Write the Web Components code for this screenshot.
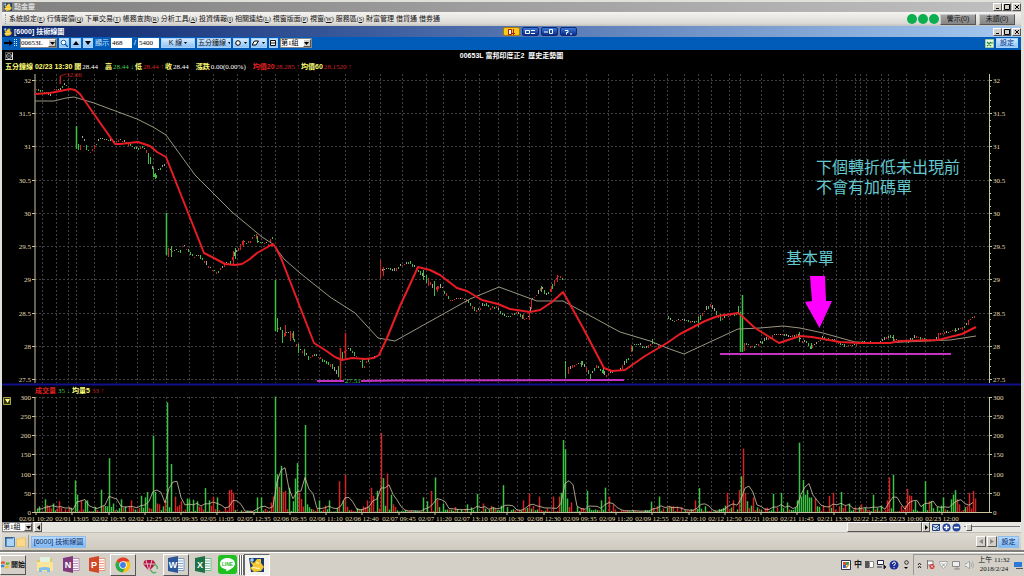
<!DOCTYPE html>
<html>
<head>
<meta charset="utf-8">
<title>點金靈</title>
<style>
    :root{
        --face: #d4d0c8;
        --sans: "Liberation Sans", "Noto Sans CJK TC", sans-serif;
        --serif: "Liberation Serif", "Noto Sans CJK TC", serif;
    }

    body{
        margin: 0;
        background: var(--face);
        font: 7px/10px var(--sans);
        color: #111;
    }
</style>
</head>
<body>
<trade-window></trade-window>
<task-bar></task-bar>

<script>
const make = (html) => {
    const template = document.createElement('template');
    template.innerHTML = html;
    return template;
};

const attach = (el, template) => {
    el.attachShadow({mode: 'open'});
    el.shadowRoot.appendChild(template.content.cloneNode(true));
};

// rules shared by every shadow root that holds controls
const base = `
    *{ box-sizing: border-box; }
    button, input, select{
        font: inherit;
        color: inherit;
        margin: 0;
        padding: 0;
        border: 0;
        border-radius: 0;
        background: none;
    }
    button{
        display: inline-flex;
        align-items: center;
        justify-content: center;
        white-space: nowrap;
    }
    svg{ display: block; }
    .raised{
        background: var(--face);
        border: 1px solid;
        border-color: #fff #555 #555 #fff;
    }
    .grow{ flex: 1; }
`;

const logo = `
    <svg width="10" height="10" viewBox="0 0 18 18">
        <path d="M1 2h15v14H3z" fill="#173a72"/>
        <path d="M2 5l4 2 3-4 4 0 0 4 3 4-3 4-7 1-4-4 3-2z" fill="#f4c62c"/>
        <path d="M4 12c3-2 5 2 8 0M8 6l3 2" stroke="#fff3b0" stroke-width="1.4" fill="none"/>
        <circle cx="4" cy="4" r="1.8" fill="#9fd0ff"/>
    </svg>`;

/* ---------- title bar with the three window buttons ---------- */
const titleBar = make(`
    <style>
        ${base}
        :host{
            display: flex;
            align-items: center;
            height: 11px;
            padding: 0 0 0 1px;
            color: #fff;
            font-weight: bold;
            background: linear-gradient(90deg, #0a246a, #3a5a9c 35%, #a6caf0);
        }
        :host([inactive]){
            height: 10px;
            color: #ddd;
            background: linear-gradient(90deg, #808080, #c0c0c0);
        }
        .side{ flex: 1; display: flex; align-items: center; gap: 1px; }
        .end{ justify-content: flex-end; gap: 0; }
        .raised{ width: 9px; height: 8px; color: #000; }
        .close{ margin-left: 1px; }
    </style>
    <div class="side">${logo}<slot></slot></div>
    <slot name="middle"></slot>
    <div class="side end">
        <button class="raised" aria-label="最小化"><svg width="6" height="6"><path d="M1 4.500h3" stroke="#000"/></svg></button>
        <button class="raised" aria-label="最大化"><svg width="6" height="6"><path d="M.5 .5h5v5h-5z" fill="none" stroke="#000"/></svg></button>
        <button class="raised close" aria-label="關閉"><svg width="6" height="6"><path d="M1 1l4 4M5 1l-4 4" stroke="#000"/></svg></button>
    </div>
`);

class TitleBar extends HTMLElement {
    constructor(){
        super();
        attach(this, titleBar);
    }
}

/* ---------- menu ---------- */
const menus = [
    ['系統設定', 'E'], ['行情報價', 'Q'], ['下單交易', 'T'], ['帳務查詢', 'R'],
    ['分析工具', 'A'], ['投資情報', 'I'], ['相關連結', 'L'], ['視窗版面', 'P'],
    ['視窗', 'W'], ['服務區', 'S'], ['財富管理'], ['借貸通'], ['借券通']
];

const menuBar = make(`
    <style>
        ${base}
        :host{
            display: flex;
            align-items: center;
            height: 14px;
            padding: 0 6px 0 3px;
            background: linear-gradient(#f4f3f1, #dcdad6 80%, #c4c2be);
        }
        nav{ display: flex; gap: 2px; padding-left: 3px; border-left: 1px dotted #999; }
        small{ font: 6px/10px var(--serif); }
        .lamp{ width: 10px; height: 10px; border-radius: 50%; background: #0caf50; margin-right: 1px; }
        .note{
            width: 36px;
            height: 11px;
            margin-left: 3px;
            background: linear-gradient(#a5a5a5, #858585);
            border: 1px solid;
            border-color: #ccc #555 #555 #ccc;
        }
        .lamp + .note{ margin-left: 0; }
    </style>
    <nav>
        ${menus.map(([name, key]) => `<button>${name}${key ? `<small>(<u>${key}</u>)</small>` : ''}</button>`).join('')}
    </nav>
    <span class="grow"></span>
    <span class="lamp"></span><span class="lamp"></span><span class="lamp"></span>
    <button class="note">警示(0)</button>
    <button class="note">未讀(0)</button>
`);

class MenuBar extends HTMLElement {
    constructor(){
        super();
        attach(this, menuBar);
    }
}

/* ---------- drop-down ---------- */
const dropDown = make(`
    <style>
        ${base}
        :host{
            display: inline-flex;
            height: 10px;
            background: #fff;
            border: 1px solid #888;
            box-sizing: border-box;
            color: #000;
        }
        select{
            appearance: none;
            flex: 1;
            min-width: 0;
            font: 7px/8px var(--serif);
            outline: 0;
        }
        .raised{ width: 8px; display: flex; align-items: center; justify-content: center; pointer-events: none; }
    </style>
    <select><option></option></select>
    <span class="raised"><svg width="5" height="3"><path d="M0 0h5L2.500 3z"/></svg></span>
`);

class DropDown extends HTMLElement {
    constructor(){
        super();
        attach(this, dropDown);
    }

    connectedCallback(){
        const select = this.shadowRoot.querySelector('select');
        select.options[0].text = this.getAttribute('value');
        select.setAttribute('aria-label', this.getAttribute('label'));
    }
}

/* ---------- chart toolbar ---------- */
const chartTools = make(`
    <style>
        ${base}
        :host{
            display: flex;
            align-items: center;
            gap: 2px;
            height: 13px;
            padding: 0 3px 1px 2px;
            background: #005cb8;
        }
        .code{ width: 37px; }
        .group{ width: 32px; }
        .tool{ height: 10px; background: linear-gradient(#d4eaff, #8fc4f8); border: 1px solid #a9d2fb; }
        .sq{ width: 10px; }
        .wide{ width: 34px; gap: 2px; }
        .mid{ width: 16px; gap: 3px; }
        .save{ width: 9px; }
        .set{ width: 22px; color: #003080; }
        label{ color: #cfe4ff; }
        input{ width: 21px; height: 10px; background: #fff; padding-left: 1px; font: 7px/10px var(--serif); color: #000; }
        .slash{ color: #fff; }
    </style>
    <svg width="14" height="10"><path d="M0 4h5v-2l4 3-4 3V6H0z" fill="#000"/><path d="M10.500 1v8M12.500 1v8" stroke="#dfefff" stroke-dasharray="1 1"/></svg>
    <drop-down class="code" value="00653L" label="商品代號"></drop-down>
    <button class="tool sq" aria-label="查詢"><svg width="8" height="8"><circle cx="3.500" cy="3.500" r="2.300" fill="#fff" stroke="#1764b4"/><path d="M5 5l3 3" stroke="#1764b4" stroke-width="1.500"/></svg></button>
    <button class="tool sq" aria-label="上一檔"><svg width="6" height="4"><path d="M0 4h6L3 0z"/></svg></button>
    <button class="tool sq" aria-label="下一檔"><svg width="6" height="4"><path d="M0 0h6L3 4z"/></svg></button>
    <label for="shown">顯示</label>
    <input id="shown" value="468">
    <span class="slash">/</span>
    <input value="5400" aria-label="總筆數">
    <button class="tool wide"><span>K 線</span><svg width="3" height="2"><path d="M0 0h3L1.500 2z"/></svg></button>
    <button class="tool wide"><span>五分鐘線</span><svg width="3" height="2"><path d="M0 0h3L1.500 2z"/></svg></button>
    <button class="tool mid" aria-label="圖形"><svg width="6" height="6"><circle cx="3" cy="3" r="2.300" fill="#fff" stroke="#000"/></svg><svg width="3" height="2"><path d="M0 0h3L1.500 2z"/></svg></button>
    <button class="tool mid" aria-label="清除"><svg width="7" height="6"><path d="M2.500 1h4l-2.500 4h-4z" fill="#fff" stroke="#000"/></svg><svg width="3" height="2"><path d="M0 0h3L1.500 2z"/></svg></button>
    <button class="tool save" aria-label="儲存"><svg width="6" height="6"><path d="M.5 .5h5v5h-5zM1 3h4" fill="#fff" stroke="#111"/></svg></button>
    <drop-down class="group" value="第1組" label="組別"></drop-down>
    <span class="grow"></span>
    <svg width="9" height="9"><path d="M.5 .5h8v8h-8z" fill="#e9f7e4" stroke="#9ccf94"/><path d="M2 3l4 4M6 3l-4 4M6 4h2" stroke="#1c8a2c" stroke-width="1.200"/></svg>
    <button class="tool set">設定</button>
`);

class ChartTools extends HTMLElement {
    constructor(){
        super();
        attach(this, chartTools);
    }
}

/* ---------- chart ---------- */
const left = 35;
const right = 989;
const priceY = v => 346 - (v - 28) * 66.6;
const volY = v => 512 - v * 0.385;

const gridX = [42, 56, 68, 76, 94, 116, 137, 153, 166, 189, 213, 237, 261, 275, 298, 319, 345, 369, 380,
    402, 426, 443, 465, 479, 498, 517, 529, 551, 565, 586, 608, 632, 654, 667, 684, 698, 711, 729, 740,
    761, 783, 803, 823, 836, 855, 860, 866, 881, 888, 906, 925, 943, 964];

const times = ['02/01 10:20', '02/01 13:05', '02/02 10:35', '02/02 12:25', '02/05 09:35', '02/05 11:05',
    '02/05 12:35', '02/06 09:35', '02/06 11:10', '02/06 12:40', '02/07 09:45', '02/07 11:20', '02/07 13:10',
    '02/08 10:30', '02/08 12:30', '02/09 09:35', '02/09 11:20', '02/09 12:55', '02/12 10:10', '02/12 12:50',
    '02/21 10:00', '02/21 11:45', '02/21 13:30', '02/22 12:25', '02/23 10:00', '02/23 12:00'];

const ma20 = '35,94 50,93 60,91 70,89 75,90 80,94 115,144 120,144 138,142 150,146 157,152 166,157 204,253 212,257 225,264 235,265 242,264 250,259 257,253 273,244 276,248 281,258 314,343 325,350 335,357 342,360 352,358 365,359 374,358 379,355 387,338 400,306 418,267 430,270 440,275 457,288 467,291 482,300 498,304 510,309 530,312 540,310 552,302 563,292 567,299 582,326 604,368 612,371 625,370 645,356 667,343 680,334 705,321 718,316 738,313 742,316 755,328 779,343 800,336 812,337 840,342 860,343 890,343 900,341 938,340 962,334 976,327';
const ma60 = '35,101 54,101 66,98 74,97 94,103 137,119 153,127 166,135 195,175 232,212 262,237 273,244 284,259 300,273 330,297 355,313 378,338 395,341 470,299 499,287 537,301 563,301 620,332 650,341 667,348 684,354 738,329 760,328 783,326 800,328 823,333 855,342 880,343 950,340 976,336';

// one run of closes for each session
const runs = [
    '36,89 42,91 50,95 54,90 60,90 63,84 68,86',
    '77,148 79,150 82,138 84,141 87,151 91,152 93,148 97,142 100,139 106,140 115,142 120,140 126,143 132,146 136,149 142,147 147,152 150,160 153,172 155,178 158,170 160,168 165,165',
    '168,250 175,251 180,250 183,245 187,250 193,256 200,257 206,263 211,270 217,272 222,267 226,264 230,262 235,253 243,242 247,243 251,240 255,233 258,242 264,243 268,245 272,238 274,244',
    '277,329 280,329 282,342 285,332 288,333 292,335 298,350 303,352 309,358 314,355 320,358 326,362 332,366 337,374 339,378 341,355 346,350 350,349 355,355 360,362 363,368 366,362 370,358 376,356',
    '382,271 388,268 393,271 400,266 405,264 409,262 415,268 420,273 425,279 430,283 434,290 440,286 445,293 450,300 457,299 465,299 470,304 476,311 480,308 485,303 490,308 496,306 500,312 505,316 512,315 517,312 523,319 529,318 531,300 535,297 541,288 546,294 550,290 555,280 559,275 563,280',
    '568,370 575,365 582,363 587,370 590,376 596,366 601,370 606,376 610,372 620,370 625,362 630,355 633,344 640,345 645,348 652,343 655,343 660,347',
    '667,316 672,321 680,320 690,322 697,320 705,310 710,304 715,312 721,319 727,316 733,314 738,312',
    '745,343 750,347 757,345 765,340 775,335 783,335 790,337 797,334 800,340 806,342 811,348 817,342 823,338 835,341 845,346 855,345 862,342 870,343 880,342 890,336 897,341 908,341 916,336 925,340 935,340 940,334 947,332 955,330 962,328 970,320 976,316'
];

// long candles: x, high, low, colour
const tall = [
    [60, 76, 84, 'r'], [76, 126, 149, 'g'], [78, 144, 150, 'g'], [80, 146, 150, 'r'], [148, 153, 164, 'g'],
    [150, 157, 164, 'g'], [153, 168, 177, 'g'], [155, 173, 179, 'g'], [166, 213, 255, 'g'], [168, 248, 257, 'r'],
    [171, 246, 257, 'g'], [233, 251, 264, 'r'], [235, 248, 259, 'g'], [243, 240, 247, 'r'], [257, 236, 243, 'g'],
    [275, 280, 331, 'g'], [277, 318, 332, 'g'], [282, 330, 343, 'g'], [285, 325, 336, 'r'], [290, 331, 341, 'r'],
    [293, 331, 340, 'g'], [298, 344, 353, 'g'], [304, 349, 356, 'g'], [338, 366, 376, 'g'], [340, 348, 380, 'r'],
    [342, 352, 360, 'g'], [345, 333, 358, 'r'], [362, 358, 368, 'g'], [380, 260, 279, 'r'], [383, 267, 276, 'r'],
    [423, 270, 280, 'g'], [426, 275, 283, 'g'], [428, 278, 286, 'r'], [434, 281, 296, 'g'], [437, 286, 292, 'r'],
    [523, 314, 319, 'r'], [529, 312, 320, 'r'], [531, 299, 309, 'r'], [541, 286, 292, 'g'], [551, 286, 292, 'r'],
    [554, 280, 286, 'r'], [557, 275, 282, 'r'], [565, 361, 378, 'g'], [568, 367, 374, 'r'], [581, 361, 367, 'g'],
    [603, 367, 374, 'g'], [631, 345, 352, 'r'], [652, 339, 344, 'g'], [698, 317, 327, 'g'], [710, 304, 307, 'r'],
    [720, 314, 321, 'g'], [738, 306, 313, 'g'], [740, 312, 352, 'g'], [742, 295, 352, 'g'], [744, 343, 351, 'r'],
    [799, 332, 342, 'g'], [811, 343, 349, 'g'], [893, 335, 341, 'g'], [938, 333, 340, 'r'], [955, 328, 332, 'g']
];

// volume spikes: x, lots, colour
const spikes = `45,33,g 47,18,r 53,22,g 59,28,r 75,82,g 77,45,g 81,30,r 85,28,g 87,30,g 101,58,g 109,140,g 113,22,g
    121,33,g 131,30,r 141,42,g 145,38,g 147,52,g 153,198,g 155,52,g 157,22,r 159,20,r 165,30,r 167,285,g 171,125,g 175,40,r
    179,18,r 181,28,r 187,35,g 189,33,g 193,32,g 197,28,g 205,62,g 209,30,g 213,40,r 217,38,g 229,57,r 231,58,r
    233,50,r 257,38,g 261,38,g 271,25,r 273,40,r 275,300,g 277,98,g 279,65,r 281,120,g 283,52,r 285,55,r 289,63,g
    293,28,g 295,87,g 297,127,g 299,50,r 301,34,r 305,226,g 307,20,g 319,30,g 329,30,g 339,80,r 343,30,g 345,97,r 367,30,r
    371,63,r 373,42,r 377,55,g 381,205,r 383,88,g 387,100,r 391,45,g 393,20,r 423,38,g 427,28,g 431,55,r 435,90,g
    437,32,r 443,22,g 467,20,g 477,47,g 483,22,r 503,70,g 523,30,r 529,48,r 539,40,r 553,40,r 559,40,r 561,50,g 563,187,g
    565,163,g 567,35,g 571,25,r 587,55,g 601,30,g 605,63,g 609,40,r 613,20,r 651,27,g 659,40,g 695,30,r 699,62,g
    727,50,r 733,30,r 739,57,r 741,93,g 743,165,r 745,50,r 747,28,g 753,38,r 773,47,g 781,50,g 787,25,g 797,30,g
    799,180,g 801,40,g 803,83,g 805,45,g 807,57,g 809,38,g 811,38,g 815,35,r 829,42,r 833,50,r 841,52,g 849,22,g
    861,20,r 873,45,g 887,30,r 889,90,r 893,97,g 907,60,r 909,43,r 911,42,r 915,28,g 923,20,g 925,80,g 929,28,r
    931,28,g 943,38,g 951,33,g 953,45,g 955,57,g 957,33,r 959,20,r 969,50,r 973,55,r 975,35,r`;

const colors = {r: '#d42424', g: '#3cc046'};
const noise = n => {
    const s = Math.sin(n * 12.9898) * 43758.5453;
    return s - Math.floor(s);
};
const bar = (x, y1, y2, c, w = 1) => `<path d="M${x + .5} ${y1}V${y2}" stroke="${colors[c] || c}" stroke-width="${w}"/>`;

const drawGrid = () => {
    let out = '';
    gridX.forEach(x => {
        out += `<path d="M${x + .5} 74V383M${x + .5} 397V512"/>`;
    });
    for(let v = 27.5; v <= 32; v += .5){
        out += `<path d="M${left} ${Math.round(priceY(v)) + .5}H${right}"/>`;
    }
    for(let v = 50; v <= 300; v += 50){
        out += `<path d="M${left} ${Math.round(volY(v)) + .5}H${right}"/>`;
    }
    return `<g stroke="#404040" stroke-dasharray="2 2">${out}</g>`;
};

const drawAxes = () => {
    let ticks = `M${left} 74V383M${left} 397V512.500H${right + .5}M${right + .5} 74V383M${right + .5} 397V512`;
    let text = '';
    const mark = (y, label) => {
        ticks += `M${left - 3} ${y}h3M${right} ${y}h3`;
        text += `<text x="31" y="${y + 2}" text-anchor="end">${label}</text><text x="993" y="${y + 2}">${label}</text>`;
    };
    for(let v = 27.5; v <= 32; v += .5) mark(Math.round(priceY(v)) + .5, v);
    for(let v = 0; v <= 300; v += 50) mark(Math.round(volY(v)) + .5, v);
    for(let v = 27.5; v <= 32; v += .1) ticks += `M${right} ${Math.round(priceY(v)) + .5}h2`;
    times.forEach((t, i) => {
        const x = Math.round(36 + i * 36.25);
        ticks += `M${x} 512v3`;
        text += `<text x="${x}" y="521" text-anchor="middle">${t}</text>`;
    });
    return `<path d="${ticks}" stroke="#c8c49c" fill="none"/><g fill="#e0dcae">${text}</g>`;
};

const drawCandles = () => {
    let out = '';
    runs.forEach(run => {
        const pts = run.split(' ').map(p => p.split(',').map(Number));
        for(let i = 1; i < pts.length; i++){
            const [x1, y1] = pts[i - 1];
            const [x2, y2] = pts[i];
            for(let x = x1 + x1 % 2; x < x2; x += 2){
                const n = noise(x);
                const y = y1 + (y2 - y1) * (x - x1) / (x2 - x1) + (n - .5) * 2;
                const h = 1 + noise(x + 7) * Math.min(5, Math.abs(y2 - y1) / 2);
                const trend = y2 > y1 ? 'g' : 'r';
                const c = n < .35 ? '#a4a494' : n < .8 ? trend : (trend === 'g' ? 'r' : 'g');
                out += bar(x, Math.round(y - h / 2), Math.round(y - h / 2) + Math.round(h), c);
            }
        }
    });
    tall.forEach(([x, hi, lo, c]) => out += bar(x, hi, lo, c, lo - hi > 20 ? 1.5 : 1));
    return out;
};

const drawVolume = () => {
    const big = {};
    spikes.trim().split(/\s+/).forEach(s => {
        const [x, v, c] = s.split(',');
        big[x] = [Number(v), c];
    });
    let out = '';
    let line = '';
    const last = [];
    for(let x = 37; x <= 976; x += 2){
        const quiet = (x > 234 && x < 256) || (x > 395 && x < 420) || (x > 615 && x < 650) ? .3 : 1;
        const [v, c] = big[x] || [Math.pow(noise(x * 3), 2) * 16 * quiet + 1, noise(x) > .5 ? 'g' : 'r'];
        last.push(v);
        if(last.length > 6) last.shift();
        out += bar(x, volY(v).toFixed(1), 512, c, 1.5);
        // every second point keeps the average line smooth
        if(x % 4 === 1) line += `${x},${volY(last.reduce((a, b) => a + b) / last.length).toFixed(1)} `;
    }
    return `${out}<polyline points="${line}" fill="none" stroke="#cfc6a6" stroke-width=".8"/>`;
};

const stockChart = make(`
    <style>
        ${base}
        :host{ display: block; background: #000; color: #fff; }
        svg{ width: 100%; height: auto; overflow: visible; }
        header{ display: flex; height: 12px; padding: 0 3px; align-items: center; font-weight: bold; }
        header button{ width: 8px; height: 8px; border: 1px solid; border-color: #555 #ddd #ddd #555; }
        header button svg{ width: 6px; height: 6px; }
        .side{ flex: 1; display: flex; }
        .quote{ display: flex; gap: 1px; height: 10px; padding-left: 3px; white-space: nowrap; }
        .quote b{ color: #ffff78; }
        .quote b.r{ color: #e02020; }
        .quote span{ font-family: var(--serif); }
        .quote .gap{ margin-left: 6px; }
        .g{ color: #44cc50; }
        .quote .r{ color: #d42424; }
        text{ font: 7px var(--serif); }
        .head{ font: bold 7px var(--sans); }
        .note{ font: 16px var(--sans); fill: #63c8d0; }
    </style>
    <header>
        <div class="side"><button aria-label="時間"><svg viewBox="0 0 6 6"><circle cx="3" cy="3" r="2.500" fill="none" stroke="#ddd" stroke-width=".8"/><path d="M1.500 3h3" stroke="#ddd" stroke-width=".8"/></svg></button></div>
        <span>00653L 富邦印度正2 &nbsp;歷史走勢圖</span>
        <div class="side"></div>
    </header>
    <div class="quote">
        <b>五分鐘線 02/23 13:30 開</b><span>28.44</span>
        <b class="gap">高</b><span class="g">28.44 ↓</span>
        <b>低</b><span class="r">28.44 ↑</span>
        <b>收</b><span>28.44</span>
        <b class="gap">漲跌</b><span>0.00(0.00%)</span>
        <b class="r gap">均價20</b><span class="r">28.285 ↑</span>
        <b>均價60</b><span class="r">28.1520 ↑</span>
    </div>
    <svg viewBox="2 72 1019 450">
        ${drawGrid()}
        ${drawAxes()}
        <path d="M2 384.500H1021" stroke="#10108a" stroke-width="2"/>
        ${drawCandles()}
        <polyline points="${ma60}" fill="none" stroke="#9a9680"/>
        <polyline points="${ma20}" fill="none" stroke="#e81c24" stroke-width="2" stroke-linejoin="round"/>
        <path d="M60 84V76l6-2" stroke="#a01818" fill="none"/>
        <text x="66" y="77" fill="#c82020">32.06</text>

        <path d="M317 381H344M361 381L395 380.500 624 380M720 354H951" stroke="#c233c2" stroke-width="2"/>
        <text x="345" y="383" fill="#44cc50">27.51</text>
        <path d="M810 276H825L826 301H832L819.500 328 805 302 812 301z" fill="#f0f"/>
        <text class="note" x="816" y="173">下個轉折低未出現前</text>
        <text class="note" x="816" y="193">不會有加碼單</text>
        <text class="note" x="786" y="264">基本單</text>

        <text class="head" x="35" y="393" fill="#e02020">成交量</text>
        <text x="58" y="393" fill="#44cc50">35 ↓</text>
        <text class="head" x="72" y="393" fill="#ffff78">均量5</text>
        <text x="92" y="393" fill="#c82020">33 ↑</text>
        <path d="M3.500 397.500h7v7h-7z" fill="#33330a" stroke="#a8a840"/>
        <path d="M5 399h5l-2.500 4z" fill="#ffff90"/>
        ${drawVolume()}
    </svg>
`);

class StockChart extends HTMLElement {
    constructor(){
        super();
        attach(this, stockChart);
    }
}

/* ---------- scroll row under the chart ---------- */
const scrollStrip = make(`
    <style>
        ${base}
        :host{ display: flex; align-items: center; height: 11px; background: #e8e6e0; border-bottom: 1px solid #c4c0b8; box-sizing: border-box; }
        drop-down{ width: 31px; margin-right: 1px; }
        .arrow{ width: 8px; height: 10px; }
        .thumb{ width: 75px; height: 10px; }
        .icons{ display: flex; gap: 1px; padding: 0 3px 0 2px; }
        input{ appearance: none; width: 56px; height: 9px; margin-right: 1px; background: linear-gradient(#777, #777) 0 3px / 100% 1px no-repeat; }
        input::-webkit-slider-thumb{ appearance: none; width: 6px; height: 7px; background: var(--face); border: 1px solid; border-color: #fff #555 #555 #fff; }
    </style>
    <drop-down value="第1組" label="組別"></drop-down>
    <button class="raised arrow" aria-label="向左"><svg width="3" height="5"><path d="M3 0v5L0 2.500z"/></svg></button>
    <span class="grow"></span>
    <span class="raised thumb"></span>
    <button class="raised arrow" aria-label="向右"><svg width="3" height="5"><path d="M0 0v5L3 2.500z"/></svg></button>
    <div class="icons">
        <button aria-label="畫線"><svg width="9" height="9"><path d="M.5 1.500h7v6h-7z" fill="#c9d8ee" stroke="#1d3f7a"/><path d="M1 3l3 2 4-4M3 8l5-4" stroke="#1d3f7a" fill="none"/></svg></button>
        <button aria-label="放大"><svg width="9" height="9"><circle cx="4.500" cy="4.500" r="4" fill="#24469c"/><path d="M2 4.500h5M4.500 2v5" stroke="#fff" stroke-width="1.500"/></svg></button>
        <button aria-label="縮小"><svg width="9" height="9"><circle cx="4.500" cy="4.500" r="4" fill="#24469c"/><path d="M2 4.500h5" stroke="#fff" stroke-width="1.500"/></svg></button>
    </div>
    <input type="range" value="4" aria-label="縮放">
`);

class ScrollStrip extends HTMLElement {
    constructor(){
        super();
        attach(this, scrollStrip);
    }
}

/* ---------- page tabs ---------- */
const tabStrip = make(`
    <style>
        ${base}
        :host{ display: flex; align-items: center; gap: 1px; height: 17px; padding: 0 2px 0 3px; background: linear-gradient(#dedad2, #cfcabf); }
        .rule{ width: 1px; height: 13px; background: #999; margin: 0 1px; }
        .tab{ height: 12px; background: linear-gradient(#b8dcff, #7fb8f4); border: 1px solid #8ebcec; color: #0a2a66; }
        .page{ width: 55px; }
        .set{ width: 21px; }
        .arrow{ width: 10px; height: 11px; }
    </style>
    <button aria-label="版面"><svg width="10" height="10"><path d="M.5 .5h9v9h-9z" fill="#a9d4f7" stroke="#4e7fb0"/><path d="M0 1h8M1 0v9" stroke="#1e4e80"/></svg></button>
    <button aria-label="資料夾"><svg width="10" height="10"><path d="M.5 2h3l1-1h5v8.500h-9z" fill="#fbd98c" stroke="#e9c46c"/></svg></button>
    <span class="rule"></span>
    <button class="tab page">[6000] 技術線圖</button>
    <span class="grow"></span>
    <button class="raised arrow" aria-label="上一頁"><svg width="4" height="5"><path d="M4 0v5L0 2.500z" fill="#888"/></svg></button>
    <button class="raised arrow" aria-label="下一頁"><svg width="4" height="5"><path d="M0 0v5L4 2.500z" fill="#888"/></svg></button>
    <button class="tab set">設定</button>
`);

class TabStrip extends HTMLElement {
    constructor(){
        super();
        attach(this, tabStrip);
    }
}

/* ---------- the whole trading window ---------- */
const tradeWindow = make(`
    <style>
        ${base}
        :host{ display: block; padding: 2px 3px 0 2px; background: #e2e0da; border-bottom: 2px solid #807e7a; }
        .switch{ display: flex; gap: 2px; margin-right: 1px; }
        .switch button{ width: 17px; height: 9px; border-radius: 2px; background: linear-gradient(#3a78d8, #0a2c88); border: 1px solid #0c2a78; }
        .switch .on{ background: #fcc81c; border-color: #a87808; }
        /* the switch sits right of centre, over the chart title's end */
        .switch{ padding-left: 56px; }
    </style>
    <title-bar inactive>點金靈</title-bar>
    <menu-bar></menu-bar>
    <title-bar>
        [6000] 技術線圖
        <div class="switch" slot="middle">
            <button class="on" aria-label="圖一"><svg width="9" height="6"><path d="M1.500 .5h3v5h-3zM6.500 0v6M5 4l1.500 1.500L8 4" fill="#fff" stroke="#a02008"/></svg></button>
            <button aria-label="圖二"><svg width="10" height="6"><path d="M.5 1.500h4v3h-4zM6 1.500h4M6 4.500h4" fill="none" stroke="#fff"/></svg></button>
            <button aria-label="圖三"><svg width="10" height="6"><path d="M0 3h4M5.500 .5h3v4h-3z" fill="none" stroke="#fff"/></svg></button>
            <button aria-label="說明"><svg width="8" height="6"><path d="M1 1.500h3v2H2.500v2M6 5h2" fill="none" stroke="#fff"/></svg></button>
        </div>
    </title-bar>
    <chart-tools></chart-tools>
    <stock-chart></stock-chart>
    <scroll-strip></scroll-strip>
    <tab-strip></tab-strip>
`);

class TradeWindow extends HTMLElement {
    constructor(){
        super();
        attach(this, tradeWindow);
    }
}

/* ---------- windows task bar ---------- */
const office = (letter, dark, light) => `
    <svg width="17" height="17" viewBox="0 0 17 17">
        <path d="M9 2.500h7v12H9z" fill="#fff" stroke="${light}"/>
        <path d="M10 5h5M10 7.500h5M10 10h5M10 12.500h5" stroke="${light}"/>
        <path d="M0 2L10 0v17L0 15z" fill="${dark}"/>
        <text x="5" y="12" text-anchor="middle" fill="#fff">${letter}</text>
    </svg>`;

const taskBar = make(`
    <style>
        ${base}
        :host{ display: flex; align-items: center; height: 24px; border-top: 1px solid #fff; box-sizing: border-box; background: var(--face); }
        text{ font: bold 9px var(--sans); }
        .start{ height: 20px; width: 26px; gap: 1px; font-weight: bold; margin-right: 6px; }
        .app{ width: 26px; height: 22px; }
        .app.raised{ margin-right: 1px; }
        .wide{ width: 22px; }
        .wide text{ font-size: 5px; }
        .on{ background: #f4f2ee; border: 1px solid; border-color: #666 #fff #fff #666; }
        .stack{ width: 6px; height: 20px; background: repeating-linear-gradient(90deg, #fff 0 1px, #666 1px 2px); }
        .tray{ display: flex; align-items: center; gap: 3px; padding-right: 3px; }
        .ime{ font-size: 8px; font-weight: bold; }
        .notify{ height: 21px; padding: 0 1px 0 3px; gap: 4px; border-left: 1px solid #999; border-top: 1px solid #999; }
        time{ width: 32px; text-align: center; font: 7px/9px var(--serif); white-space: nowrap; }
    </style>
    <button class="raised start"><svg width="9" height="9"><path d="M0 2q2-1.500 4 0L3.500 4Q2 3 0 4z" fill="#e8542c"/><path d="M5 2q2 1 4 0L8 4.500q-2 1-3.500 0z" fill="#6cb43c"/><path d="M0 5q2-1 3.500 0L3 7.500Q1.500 6.500 0 7.500z" fill="#3a86d8"/><path d="M4.500 5.500q2 1 3.500 0L7.500 8q-2 1-3.500 0z" fill="#f4c020"/></svg>開始</button>
    <button class="app" aria-label="檔案總管"><svg width="18" height="18"><path d="M1 4h6l1-2h8v4H1z" fill="#e8c660"/><path d="M4 1h10v7H4z" fill="#dff2e4"/><path d="M1 6h16v9H1z" fill="#fbe59a"/><path d="M3 16v-4q6-2 11 0v4h-3v-2H6v2z" fill="#7cc0e8"/></svg></button>
    <button class="app" aria-label="OneNote">${office('N', '#80397b', '#b889b4')}</button>
    <button class="app" aria-label="PowerPoint">${office('P', '#d24726', '#e8957c')}</button>
    <button class="app raised" aria-label="Chrome"><svg width="16" height="16" viewBox="0 0 16 16"><circle cx="8" cy="8" r="7.500" fill="#fbc116"/><path d="M8 8L1.500 4.200A7.500 7.500 0 0 1 14.600 4.400H8z" fill="#e33b2e"/><path d="M8 8L1.500 4.200A7.500 7.500 0 0 0 7.500 15.500L11 9.500z" fill="#2da94f"/><circle cx="8" cy="8" r="3.700" fill="#fff"/><circle cx="8" cy="8" r="2.900" fill="#3f7fe8"/></svg></button>
    <button class="app" aria-label="寶石"><svg width="18" height="18"><path d="M4 4h8l3 4-7 7-6-7z" fill="#b01440"/><path d="M2 8h13M5 4l3 11 3-11" stroke="#f2b8c8" fill="none"/><path d="M12 9a3 3 0 0 1 4 4M15 16a3 3 0 0 1-5-2" stroke="#5cae60" stroke-width="1.500" fill="none"/></svg></button>
    <button class="app raised" aria-label="Word">${office('W', '#2b579a', '#7a9cce')}</button>
    <button class="app" aria-label="Excel">${office('X', '#1e7145', '#74b692')}</button>
    <button class="app wide" aria-label="LINE"><svg width="19" height="19"><rect width="19" height="19" rx="3" fill="#1fc01f"/><path d="M9.500 3C5 3 2 5.500 2 8.700c0 3 2.500 5 6 5.500.5.300.2 1.500.2 2 3-1 8.800-4 8.800-7.500C17 5.500 14 3 9.500 3z" fill="#fff"/><text x="9.500" y="11" text-anchor="middle" fill="#1fc01f">LINE</text></svg></button>
    <span class="stack"></span>
    <button class="app on" aria-label="點金靈">${logo.replace('width="10" height="10"', 'width="18" height="18"')}</button>
    <span class="grow"></span>
    <div class="tray">
        <svg width="10" height="10"><path d="M.5 .5h9v9h-9z" fill="#fff" stroke="#335"/><path d="M2 2h3v3H2z" fill="#e05030"/><path d="M5 2h3v3H5z" fill="#30a050"/><path d="M2 5h3v3H2z" fill="#3060d0"/><path d="M5 8l3-4" stroke="#d0a020" stroke-width="1.500"/></svg>
        <span class="ime">中</span>
        <svg width="9" height="9"><path d="M0 1h4v7H0z" fill="#555"/><path d="M4.500 1.500h4v6h-4z" fill="#fff" stroke="#888"/></svg>
        <svg width="9" height="9"><path d="M.5 .5h6v4h-6z" fill="#fff" stroke="#224"/><path d="M0 7h5M7 5l2 2-2 2z" stroke="#224"/></svg>
        <svg width="10" height="10" viewBox="0 0 10 10"><circle cx="5" cy="5" r="4.500" fill="#1c2f96"/><path d="M3.500 4q0-2 1.500-2t1.500 1.500Q6.500 4.500 5 5v1M5 7v1.200" stroke="#fff" fill="none"/></svg>
        <svg width="8" height="10"><circle cx="4.500" cy="2.500" r="1.800" fill="none" stroke="#333"/><path d="M2 7h4L4 9z"/></svg>
    </div>
    <div class="tray notify">
        <svg width="5" height="7"><path d="M1 3l1.500-2L4 3M1 6l1.500-2L4 6" stroke="#222" fill="none"/></svg>
        <svg width="9" height="10"><path d="M1.500 0v9M2 1h5v4H2" fill="#fff" stroke="#777"/><circle cx="6" cy="6.500" r="2.500" fill="#d83030"/><path d="M5 5.500l2 2M7 5.500l-2 2" stroke="#fff"/></svg>
        <svg width="9" height="10"><path d="M.5 1.500h8q0 5-4 7-4-2-4-7z" fill="#f2f2f0" stroke="#aaa"/><path d="M3 3.500l3 3M6 3.500l-3 3" stroke="#999"/></svg>
        <svg width="9" height="10"><path d="M.5 1.500h7v5h-7zM2 9h6M5 6v3" fill="#eee" stroke="#888"/></svg>
        <svg width="9" height="10"><path d="M0 3.500h2l2.500-2.500v8L2 6.500H0z" fill="#eee" stroke="#999" stroke-width=".8"/><path d="M6 3q1 2 0 4M7.500 1.500q2 3.500 0 7" stroke="#aaa" fill="none"/></svg>
        <time>上午 11:32<br>2018/2/24</time>
        <svg width="9" height="8"><path d="M0 1h8v5H0z" fill="#2c78d8"/><path d="M2 7.500h7" stroke="#555"/></svg>
    </div>
`);

class TaskBar extends HTMLElement {
    constructor(){
        super();
        attach(this, taskBar);
    }
}

// leaf elements first, the window that holds them last
window.customElements.define('title-bar', TitleBar);
window.customElements.define('menu-bar', MenuBar);
window.customElements.define('drop-down', DropDown);
window.customElements.define('chart-tools', ChartTools);
window.customElements.define('stock-chart', StockChart);
window.customElements.define('scroll-strip', ScrollStrip);
window.customElements.define('tab-strip', TabStrip);
window.customElements.define('trade-window', TradeWindow);
window.customElements.define('task-bar', TaskBar);
</script>
</body>
</html>
